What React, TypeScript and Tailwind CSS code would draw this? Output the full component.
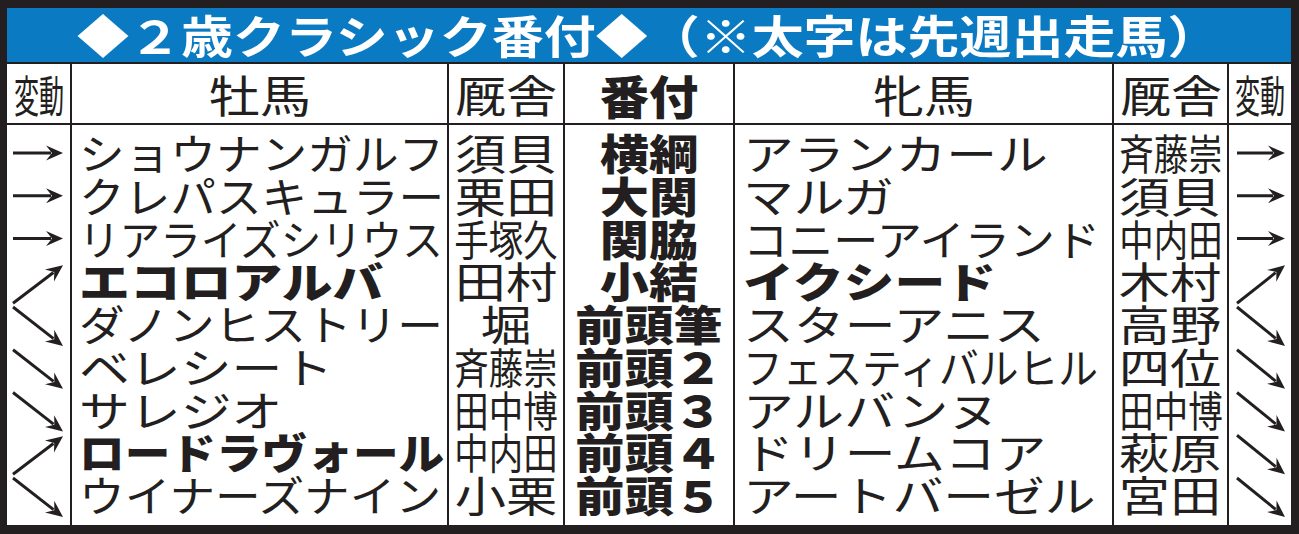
import React from "react";

const INK = "#231f20";

type Row = { name: string; nameCls: string; bold?: boolean; trainer: string; trCls: string };

const leftRows: Row[] = [
  { name: "ショウナンガルフ", nameCls: "scale-x-[1.087]", trainer: "須貝", trCls: "scale-x-[1.22]" },
  { name: "クレパスキュラー", nameCls: "scale-x-[1.087]", trainer: "栗田", trCls: "scale-x-[1.22]" },
  { name: "リアライズシリウス", nameCls: "scale-x-[0.966]", trainer: "手塚久", trCls: "scale-x-[0.82]" },
  { name: "エコロアルバ", nameCls: "scale-x-[1.21]", bold: true, trainer: "田村", trCls: "scale-x-[1.22]" },
  { name: "ダノンヒストリー", nameCls: "scale-x-[1.087]", trainer: "堀", trCls: "scale-x-[1.22]" },
  { name: "ベレシート", nameCls: "scale-x-[1.21]", trainer: "斉藤崇", trCls: "scale-x-[0.82]" },
  { name: "サレジオ", nameCls: "scale-x-[1.21]", trainer: "田中博", trCls: "scale-x-[0.82]" },
  { name: "ロードラヴォール", nameCls: "scale-x-[1.087]", bold: true, trainer: "中内田", trCls: "scale-x-[0.82]" },
  { name: "ウイナーズナイン", nameCls: "scale-x-[1.087]", trainer: "小栗", trCls: "scale-x-[1.22]" },
];

const rightRows: Row[] = [
  { name: "アランカール", nameCls: "scale-x-[1.21]", trainer: "斉藤崇", trCls: "scale-x-[0.82]" },
  { name: "マルガ", nameCls: "scale-x-[1.21]", trainer: "須貝", trCls: "scale-x-[1.22]" },
  { name: "コニーアイランド", nameCls: "scale-x-[1.075]", trainer: "中内田", trCls: "scale-x-[0.82]" },
  { name: "イクシード", nameCls: "scale-x-[1.21]", bold: true, trainer: "木村", trCls: "scale-x-[1.22]" },
  { name: "スターアニス", nameCls: "scale-x-[1.21]", trainer: "高野", trCls: "scale-x-[1.22]" },
  { name: "フェスティバルヒル", nameCls: "scale-x-[0.945]", trainer: "四位", trCls: "scale-x-[1.22]" },
  { name: "アルバンヌ", nameCls: "scale-x-[1.21]", trainer: "田中博", trCls: "scale-x-[0.82]" },
  { name: "ドリームコア", nameCls: "scale-x-[1.21]", trainer: "萩原", trCls: "scale-x-[1.22]" },
  { name: "アートバーゼル", nameCls: "scale-x-[1.21]", trainer: "宮田", trCls: "scale-x-[1.22]" },
];

const ranks = ["横綱", "大関", "関脇", "小結", "前頭筆", "前頭２", "前頭３", "前頭４", "前頭５"];

type Dir = "r" | "ur" | "dr";
const leftDirs: Dir[] = ["r", "r", "r", "ur", "dr", "dr", "dr", "ur", "dr"];
const rightDirs: Dir[] = ["r", "r", "r", "ur", "dr", "dr", "dr", "dr", "dr"];

const ROW = 42.75;
const FIRST = 30;

function Arrow({ x1, y1, x2, y2 }: { x1: number; y1: number; x2: number; y2: number }) {
  const a = Math.atan2(y2 - y1, x2 - x1);
  const c = Math.cos(a);
  const s = Math.sin(a);
  const pt = (dx: number, dy: number) => [x2 + dx * c - dy * s, y2 + dx * s + dy * c];
  const L = 17;
  const W = 7.5;
  const B = 11;
  const p1 = pt(-L, -W);
  const p2 = pt(-B, 0);
  const p3 = pt(-L, W);
  const le = pt(-B - 1, 0);
  return (
    <g>
      <line x1={x1} y1={y1} x2={le[0]} y2={le[1]} stroke={INK} strokeWidth={2.9} />
      <polygon points={`${x2},${y2} ${p1[0]},${p1[1]} ${p2[0]},${p2[1]} ${p3[0]},${p3[1]}`} fill={INK} />
    </g>
  );
}

function ArrowColumn({ dirs, w, x0, x1 }: { dirs: Dir[]; w: number; x0: number; x1: number }) {
  return (
    <svg width={w} height={400} viewBox={`0 0 ${w} 400`} className="block">
      {dirs.map((d, i) => {
        const c = FIRST + i * ROW;
        if (d === "r") return <Arrow key={i} x1={x0} y1={c - 2} x2={x1} y2={c - 2} />;
        if (d === "ur") return <Arrow key={i} x1={x0} y1={c + 20} x2={x1} y2={c - 18} />;
        return <Arrow key={i} x1={x0} y1={c - 19} x2={x1} y2={c + 20} />;
      })}
    </svg>
  );
}

function NameColumn({ rows, pl }: { rows: Row[]; pl: string }) {
  return (
    <div className={`bg-white flex flex-col pt-[6px] ${pl}`}>
      {rows.map((r, i) => (
        <div key={i} className="h-[42.75px] leading-[42.75px] whitespace-nowrap">
          <span
            className={`inline-block origin-left text-[42px] ${r.bold ? "font-black" : "font-normal"} ${r.nameCls}`}
          >
            {r.name}
          </span>
        </div>
      ))}
    </div>
  );
}

function TrainerColumn({ rows }: { rows: Row[] }) {
  return (
    <div className="bg-white flex flex-col pt-[6px]">
      {rows.map((r, i) => (
        <div key={i} className="h-[42.75px] leading-[42.75px] whitespace-nowrap flex justify-center">
          <span className={`inline-block origin-center text-[42px] font-normal ${r.trCls}`}>{r.trainer}</span>
        </div>
      ))}
    </div>
  );
}

export default function App() {
  return (
    <div className="w-[1299px] h-[534px] bg-[#231f20] pt-[8px] pl-[7px] pr-[8px] pb-[9px] flex flex-col text-[#231f20] font-['Noto_Sans_CJK_JP',sans-serif] overflow-hidden">
      <div className="h-[54px] bg-[#0a7ac2] flex items-center pl-[70px]">
        <span className="inline-block origin-left scale-x-[1.155] text-white font-bold text-[45px] leading-[54px] whitespace-nowrap">
          ◆２歳クラシック番付◆（※太字は先週出走馬）
        </span>
      </div>
      <div className="mt-[2px] grid grid-cols-[63px_375px_114px_168px_377px_113px_62px] grid-rows-[59px_400px] gap-[2px]">
        {/* header */}
        <div className="bg-white flex items-center justify-center">
          <span className="inline-block scale-x-[0.57] text-[44px] leading-none whitespace-nowrap">変動</span>
        </div>
        <div className="bg-white flex items-center justify-center">
          <span className="inline-block scale-x-[1.16] text-[44px] leading-none">牡馬</span>
        </div>
        <div className="bg-white flex items-center justify-center">
          <span className="inline-block scale-x-[1.16] text-[44px] leading-none">厩舎</span>
        </div>
        <div className="bg-white flex items-center justify-center">
          <span className="inline-block scale-x-[1.07] text-[46px] font-black leading-none">番付</span>
        </div>
        <div className="bg-white flex items-center justify-center">
          <span className="inline-block scale-x-[1.16] text-[44px] leading-none">牝馬</span>
        </div>
        <div className="bg-white flex items-center justify-center">
          <span className="inline-block scale-x-[1.16] text-[44px] leading-none">厩舎</span>
        </div>
        <div className="bg-white flex items-center justify-center">
          <span className="inline-block scale-x-[0.57] text-[44px] leading-none whitespace-nowrap">変動</span>
        </div>

        {/* body */}
        <div className="bg-white">
          <ArrowColumn dirs={leftDirs} w={63} x0={6} x1={56} />
        </div>
        <NameColumn rows={leftRows} pl="pl-[7px]" />
        <TrainerColumn rows={leftRows} />
        <div className="bg-white flex flex-col pt-[6px]">
          {ranks.map((r, i) => (
            <div key={i} className="h-[42.75px] leading-[42.75px] whitespace-nowrap flex justify-center">
              <span className="inline-block origin-center scale-x-[1.17] text-[42px] font-black">{r}</span>
            </div>
          ))}
        </div>
        <NameColumn rows={rightRows} pl="pl-[8px]" />
        <TrainerColumn rows={rightRows} />
        <div className="bg-white">
          <ArrowColumn dirs={rightDirs} w={62} x0={8} x1={56} />
        </div>
      </div>
    </div>
  );
}
